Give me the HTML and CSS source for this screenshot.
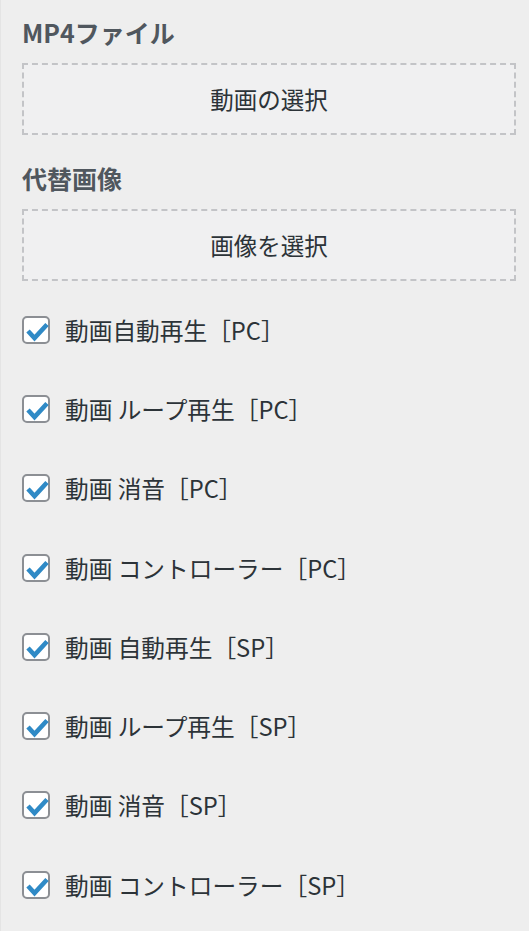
FILE: index.html
```html
<!DOCTYPE html>
<html lang="ja">
<head>
<meta charset="utf-8">
<link rel="stylesheet" href="styles.css">
</head>
<body>
<div class="panel">
  <h2 class="heading">MP4ファイル</h2>
  <div class="dropzone">動画の選択</div>
  <h2 class="heading">代替画像</h2>
  <div class="dropzone">画像を選択</div>
  <ul class="options">
    <li class="option"><span class="box"><svg viewBox="0 0 28 28"><polyline points="6,15 12.5,22 25,8.5"/></svg></span><span class="label">動画自動再生［PC］</span></li>
    <li class="option"><span class="box"><svg viewBox="0 0 28 28"><polyline points="6,15 12.5,22 25,8.5"/></svg></span><span class="label">動画 ループ再生［PC］</span></li>
    <li class="option"><span class="box"><svg viewBox="0 0 28 28"><polyline points="6,15 12.5,22 25,8.5"/></svg></span><span class="label">動画 消音［PC］</span></li>
    <li class="option"><span class="box"><svg viewBox="0 0 28 28"><polyline points="6,15 12.5,22 25,8.5"/></svg></span><span class="label">動画 コントローラー［PC］</span></li>
    <li class="option"><span class="box"><svg viewBox="0 0 28 28"><polyline points="6,15 12.5,22 25,8.5"/></svg></span><span class="label">動画 自動再生［SP］</span></li>
    <li class="option"><span class="box"><svg viewBox="0 0 28 28"><polyline points="6,15 12.5,22 25,8.5"/></svg></span><span class="label">動画 ループ再生［SP］</span></li>
    <li class="option"><span class="box"><svg viewBox="0 0 28 28"><polyline points="6,15 12.5,22 25,8.5"/></svg></span><span class="label">動画 消音［SP］</span></li>
    <li class="option"><span class="box"><svg viewBox="0 0 28 28"><polyline points="6,15 12.5,22 25,8.5"/></svg></span><span class="label">動画 コントローラー［SP］</span></li>
  </ul>
</div>
</body>
</html>
```
FILE: styles.css
```css
html, body {
  margin: 0;
  padding: 0;
  background: #eeeeee;
}
body {
  font-family: "Noto Sans CJK JP", "Noto Sans", sans-serif;
  color: #2c3338;
}
.panel {
  padding: 17px 13px 0 22px;
  display: flex;
  flex-direction: column;
  border-left: 1px solid #e4e4e4;
  box-sizing: border-box;
  min-height: 931px;
}
.heading {
  margin: 0 0 16px -1px;
  font-size: 25px;
  line-height: 30px;
  font-weight: 700;
  color: #50575e;
}
.dropzone {
  margin-left: -1px;
  height: 72px;
  box-sizing: border-box;
  border: 2px dashed #c3c4c7;
  background: #f0f0f1;
  display: flex;
  align-items: center;
  justify-content: center;
  font-size: 23.5px;
  color: #2c3338;
  margin-bottom: 28px;
}
.options {
  list-style: none;
  margin: -19px 0 0 -1px;
  padding: 0;
}
.option {
  height: 79.3px;
  display: flex;
  align-items: center;
  gap: 15px;
}
.box {
  width: 28px;
  height: 28px;
  box-sizing: border-box;
  border: 2px solid #8c8f94;
  border-radius: 5px;
  background: #ffffff;
  flex: none;
  position: relative;
}
.box svg {
  position: absolute;
  left: -2px;
  top: -2px;
  width: 28px;
  height: 28px;
  fill: none;
  stroke: #2f8ac6;
  stroke-width: 4.6;
  stroke-linejoin: miter;
}
.label {
  font-size: 23.7px;
  color: #2c3338;
  line-height: 30px;
}
```
